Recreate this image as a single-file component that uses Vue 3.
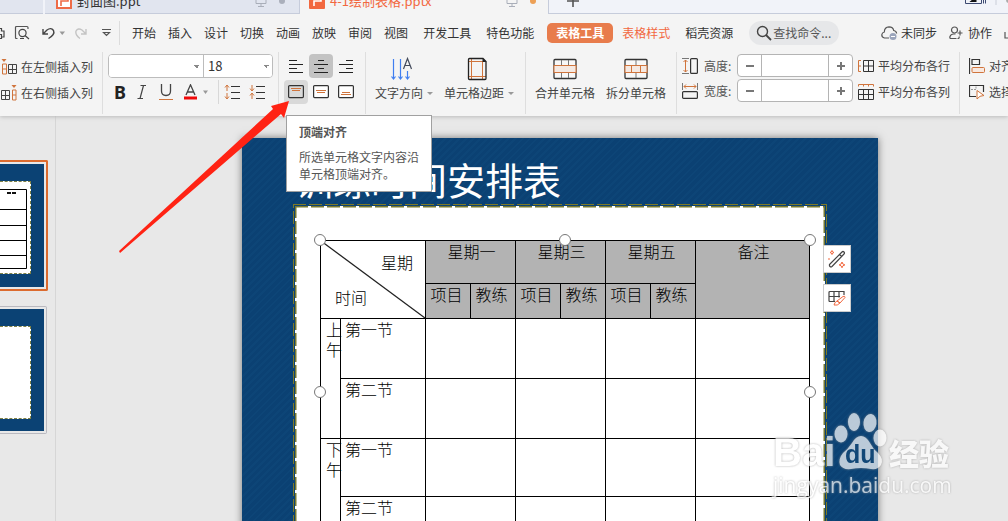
<script setup>
const tabs = ['开始', '插入', '设计', '切换', '动画', '放映', '审阅', '视图']
const days = ['星期一', '星期三', '星期五']
const rows = [
  { part: '上午', name: '第一节', h: 'r60' },
  { name: '第二节', h: 'r60' },
  { part: '下午', name: '第一节', h: 'r58' },
  { name: '第二节', h: 'r60' }
]
const sizes = [
  { id: 'row-height', label: '高度:' },
  { id: 'col-width', label: '宽度:' }
]
const thumbLines = [20, 36, 51, 66]
</script>

<template>
  <div class="app">
    <header class="tabs">
      <div class="tab tab-prev"></div>
      <div class="tab tab-idle">
        <svg class="doc" width="16" height="16" viewBox="0 0 16 16"><rect x="1" y="1" width="14" height="14" fill="#fff" stroke="#ee6b47" stroke-width="2" /><path d="M5 13V8h7V4H4" fill="none" stroke="#ee6b47" stroke-width="1.6" /></svg>
        <span class="tab-name">封面图.ppt</span>
        <svg class="screen" width="12" height="12" viewBox="0 0 12 12"><path d="M1 1h10v7.500H1zM6 8.500V11M3 11.500h6" fill="none" stroke="#a9aeb9" /></svg>
        <i class="dot grey"></i>
      </div>
      <div class="tab tab-active">
        <svg class="doc" width="16" height="16" viewBox="0 0 16 16"><rect width="16" height="16" rx="1" fill="#f2683f" /><path d="M5 13V8h7V4H4" fill="none" stroke="#fff" stroke-width="1.6" /></svg>
        <span class="tab-name">4-1绘制表格.pptx</span>
        <svg class="screen" width="12" height="12" viewBox="0 0 12 12"><path d="M1 1h10v7.500H1zM6 8.500V11M3 11.500h6" fill="none" stroke="#a9aeb9" /></svg>
        <i class="dot orange"></i>
      </div>
      <div class="tab tab-rest">
        <svg width="12" height="12" viewBox="0 0 12 12"><path d="M6 0v12M0 6h12" stroke="#555" stroke-width="1.600" /></svg>
        <svg class="win-icon" width="43" height="16" viewBox="0 0 43 16"><path d="M.5 0v10.500h16V0M18.500 0v10.500M20.500 0v10.500" fill="none" stroke="#3d4a72" /><path d="M7 2q2-2 3.500 0T7 8h4.500" fill="none" stroke="#111" stroke-width="1.800" /><path d="M31 0v12" stroke="#c9cdd8" /><circle cx="44" cy="7" r="3" fill="#aaa" /></svg>
      </div>
    </header>

    <nav class="menu">
      <div class="quick">
        <svg width="5" height="16" viewBox="0 0 5 16"><path d="M0 3.500h1.500V6H4v6H1.500M0 9.500h1.500v4H0" fill="none" stroke="#444" stroke-width="1.200" /></svg>
        <svg class="q-preview" width="16" height="16" viewBox="0 0 16 16"><path d="M3.500 13.500h-1q-1 0-1-1v-10q0-1 1-1h10.500q1 0 1 1V4" fill="none" stroke="#555" stroke-width="1.200" /><circle cx="8.500" cy="8" r="3.600" fill="none" stroke="#444" stroke-width="1.200" /><path d="M11 10.500l4 3.500M6 13.500h4" stroke="#444" stroke-width="1.200" /></svg>
        <svg class="q-undo" width="24" height="16" viewBox="0 0 24 16"><path d="M2 4v5h5M2 9l4-4q4-3 6.500.5 1.800 4-5 8" fill="none" stroke="#444" stroke-width="1.400" /><path d="M18.500 6.500h5.500L21.250 10z" fill="#999" /></svg>
        <svg class="q-redo" width="13" height="16" viewBox="0 0 13 16"><path d="M11 4v5H6M11 9L7 5Q3 2.500 1 6q-1 4 4 7.500" fill="none" stroke="#c4c4c4" stroke-width="1.400" /></svg>
        <svg class="q-more" width="9" height="10" viewBox="0 0 9 10"><path d="M0 1.500h9M1.500 4.500h6L4.500 7.500z" fill="none" stroke="#555" stroke-width="1.200" /></svg>
      </div>
      <div class="menu-items">
        <a v-for="t in tabs" :key="t" href="#">{{ t }}</a>
      </div>
      <a class="m-dev" href="#">开发工具</a>
      <a class="m-special" href="#">特色功能</a>
      <a class="m-table" href="#">表格工具</a>
      <a class="m-style" href="#">表格样式</a>
      <a class="m-docer" href="#">稻壳资源</a>
      <button class="search">
        <svg width="16" height="16" viewBox="0 0 16 16"><circle cx="6.500" cy="6.500" r="5" fill="none" stroke="#444" stroke-width="1.400" /><path d="M10 10l5 5" stroke="#444" stroke-width="1.800" /></svg>
        查找命令...
      </button>
      <div class="menu-end">
        <button class="plain sync">
          <svg width="17" height="14" viewBox="0 0 17 14"><path d="M8 12H3.500Q.7 11.500.8 8.800 1 6.500 3.300 6 3.500 1 8 .9 12 1 12.700 4.500 15.500 5 15.600 7.500" fill="none" stroke="#555" stroke-width="1.200" /><circle cx="12" cy="10.500" r="3.500" fill="#9aa4bb" /><path d="M10 10.500h4" stroke="#fff" /></svg>
          未同步
        </button>
        <button class="plain team">
          <svg width="14" height="14" viewBox="0 0 14 14"><circle cx="5.500" cy="4" r="3" fill="none" stroke="#555" stroke-width="1.200" /><path d="M7.500 12.500h-6q-1-.5-.5-2 1-2.500 3.500-2.500h2M8.500 12.500h1q1-.5.500-2M11 4.500v5M8.500 7h5" fill="none" stroke="#555" stroke-width="1.200" /></svg>
          协作
        </button>
        <svg class="share" width="4" height="14" viewBox="0 0 4 14"><path d="M1 6v6h3" fill="none" stroke="#555" stroke-width="1.200" /></svg>
      </div>
    </nav>

    <section class="ribbon">
      <div class="group g-insert">
        <button class="plain cmd">
          <svg width="16" height="16" viewBox="0 0 16 16"><path d="M.5 0h5L3 3z" fill="#d0743c" /><path d="M1.500 5h4v10h-4zM1.500 10h4" fill="none" stroke="#d0743c" /><path d="M7.500 5.500h8v9h-8zM11.500 5.500v9M7.500 10.500h8" fill="none" stroke="#444" /></svg>
          在左侧插入列
        </button>
        <button class="plain cmd">
          <svg width="16" height="16" viewBox="0 0 16 16"><path d="M10.500 0h5L13 3z" fill="#d0743c" /><path d="M11.500 5h3.500v10h-3.500zM11.500 10H15" fill="none" stroke="#d0743c" /><path d="M.5 5.500h8v9H.5zM4.500 5.500v9M.5 10.500h8" fill="none" stroke="#444" /></svg>
          在右侧插入列
        </button>
      </div>

      <div class="group g-font">
        <div class="combos">
          <select class="face" aria-label="字体"><option></option></select>
          <select class="size" aria-label="字号"><option>18</option></select>
        </div>
        <div class="styles">
          <button class="plain bold" aria-label="加粗">B</button>
          <button class="plain" aria-label="倾斜"><svg width="14" height="16" viewBox="0 0 14 16"><path d="M5.500 1.500H11M2.500 14.500H8M8.500 1.500L5 14.500" fill="none" stroke="#444" stroke-width="1.200" /></svg></button>
          <button class="plain" aria-label="下划线"><svg width="16" height="16" viewBox="0 0 16 16"><path d="M3.500 0v7q0 4.500 4.500 4.500T12.500 7V0" fill="none" stroke="#444" stroke-width="1.300" /><path d="M1 15.500h14" stroke="#d0743c" /></svg></button>
          <button class="plain" aria-label="字体颜色"><svg width="26" height="16" viewBox="0 0 26 16"><path d="M3 11L7.500.8 12 11M4.500 8h6" fill="none" stroke="#444" stroke-width="1.300" /><path d="M1 14h13" stroke="#f00808" stroke-width="3" /><path d="M20 6.500h5L22.500 10z" fill="#999" /></svg></button>
          <i class="bar"></i>
          <button class="plain" aria-label="增大行距"><svg width="16" height="16" viewBox="0 0 16 16"><path d="M3 7V1.500M1 3.500L3 1l2 2.500M3 9v5.500M1 12.500L3 15l2-2.500" fill="none" stroke="#d0743c" /><path d="M7 2.500h9M7 8.500h9M7 14.500h9" stroke="#333" stroke-width="1.200" /></svg></button>
          <button class="plain wide" aria-label="减小行距"><svg width="16" height="16" viewBox="0 0 16 16"><path d="M3 1v5.500M1 4.500L3 7l2-2.500M3 15V9.500M1 11.500L3 9l2 2.500" fill="none" stroke="#d0743c" /><path d="M7 2.500h9M7 8.500h9M7 14.500h9" stroke="#333" stroke-width="1.200" /></svg></button>
        </div>
      </div>

      <div class="group g-align">
        <button class="plain sq" aria-label="左对齐"><svg width="16" height="16" viewBox="0 0 16 16"><path d="M1 2.500h8M1 6.500h14M1 10.500h8M1 14.500h14" stroke="#222" /></svg></button>
        <button class="plain sq on" aria-label="居中"><svg width="16" height="16" viewBox="0 0 16 16"><path d="M5 2.500h6M1 6.500h14M5 10.500h6M1 14.500h14" stroke="#222" /></svg></button>
        <button class="plain sq" aria-label="右对齐"><svg width="16" height="16" viewBox="0 0 16 16"><path d="M8 2.500h7M1 6.500h14M8 10.500h7M1 14.500h14" stroke="#222" /></svg></button>
        <button class="plain sq hover" aria-label="顶端对齐"><svg width="16" height="14" viewBox="0 0 16 14"><rect x=".6" y=".6" width="14.800" height="12" rx="1" fill="none" stroke="#333" stroke-width="1.200" /><path d="M3 3.500h10M4 5.500h8" stroke="#d0743c" /></svg></button>
        <button class="plain sq" aria-label="垂直居中"><svg width="16" height="14" viewBox="0 0 16 14"><rect x=".6" y=".6" width="14.800" height="12" rx="1" fill="#fff" stroke="#333" stroke-width="1.200" /><path d="M3 5.500h10M4 7.500h8" stroke="#d0743c" /></svg></button>
        <button class="plain sq" aria-label="底端对齐"><svg width="16" height="14" viewBox="0 0 16 14"><rect x=".6" y=".6" width="14.800" height="12" rx="1" fill="#fff" stroke="#333" stroke-width="1.200" /><path d="M4 7.500h8M3 9.500h10" stroke="#d0743c" /></svg></button>
      </div>

      <div class="group g-big g-text">
        <button class="plain big">
          <svg width="24" height="24" viewBox="0 0 24 24"><path d="M3.500 2v20M1.500 19.500l2 2.500 2-2.500M10.500 2v20M8.500 19.500l2 2.500 2-2.500M17.500 14v8M15.500 19.500l2 2.500 2-2.500" fill="none" stroke="#3f7ef0" stroke-width="1.200" /><path d="M13.500 12l4-10.500 4 10.500M15 8.500h5" fill="none" stroke="#444b5c" stroke-width="1.200" /></svg>
          <span>文字方向<i class="caret"></i></span>
        </button>
        <button class="plain big">
          <svg width="24" height="24" viewBox="0 0 24 24"><path d="M6.500 1v22M17.500 5v18M3 4.500h15M3 19.500h18" stroke="#d0743c" /><path d="M4.500 1.500H18l3 3v17q0 1-1 1H4.500q-1 0-1-1v-19q0-1 1-1z" fill="none" stroke="#222" stroke-width="1.300" /><path d="M17.500 1v4H21.500z" fill="#222" /></svg>
          <span>单元格边距<i class="caret"></i></span>
        </button>
      </div>

      <div class="group g-big g-merge">
        <button class="plain big">
          <svg width="24" height="24" viewBox="0 0 24 24"><rect x="1" y="2.500" width="22" height="19" rx="1" fill="#f8f8f8" stroke="#333" stroke-width="1.300" /><path d="M8.500 3v6M15.500 3v6M8.500 15v6M15.500 15v6" stroke="#777" /><rect x="1" y="8.500" width="22" height="7" fill="#f5e9e2" stroke="#d0743c" /></svg>
          <span>合并单元格</span>
        </button>
        <button class="plain big">
          <svg width="24" height="24" viewBox="0 0 24 24"><rect x="1" y="2.500" width="22" height="19" rx="1" fill="#f8f8f8" stroke="#333" stroke-width="1.300" /><path d="M12 3v6M12 15v6" stroke="#777" /><rect x="1" y="8.500" width="22" height="7" fill="#f5e9e2" stroke="#d0743c" /><path d="M7.500 8.500v7M16.500 8.500v7" stroke="#d0743c" /></svg>
          <span>拆分单元格</span>
        </button>
      </div>

      <div class="group g-size">
        <div v-for="(s, i) in sizes" :key="s.id" class="size-row">
          <svg v-if="i === 0" width="16" height="16" viewBox="0 0 16 16"><path d="M0 .5h7M0 15.500h7" stroke="#777" /><path d="M3.500 2v12M1.500 4l2-2 2 2M1.500 12l2 2 2-2" fill="none" stroke="#d0743c" /><rect x="8.600" y=".6" width="6.800" height="14.800" rx="1" fill="none" stroke="#333" stroke-width="1.200" /></svg>
          <svg v-else width="16" height="16" viewBox="0 0 16 16"><path d="M.5 0v7M15.500 0v7" stroke="#777" /><path d="M2 3.500h12M4 1.500l-2 2 2 2M12 1.500l2 2-2 2" fill="none" stroke="#d0743c" /><rect x=".6" y="8.600" width="14.800" height="6.800" rx="1" fill="none" stroke="#333" stroke-width="1.200" /></svg>
          <label :for="s.id">{{ s.label }}</label>
          <div class="stepper">
            <button class="plain" aria-label="减少"><svg width="8" height="8" viewBox="0 0 8 8"><path d="M0 4h8" stroke="#777" stroke-width="2" /></svg></button>
            <input :id="s.id" type="text" />
            <button class="plain" aria-label="增加"><svg width="8" height="8" viewBox="0 0 8 8"><path d="M0 4h8M4 0v8" stroke="#777" stroke-width="2" /></svg></button>
          </div>
        </div>
      </div>

      <div class="group g-dist">
        <button class="plain cmd">
          <svg width="16" height="16" viewBox="0 0 16 16"><path d="M3 2.500H.5v11H3M.5 8H3" fill="none" stroke="#d0743c" /><path d="M5.500 2.500h10v11h-10zM10.500 2.500v11M5.500 8h10" fill="none" stroke="#333" /></svg>
          平均分布各行
        </button>
        <button class="plain cmd">
          <svg width="16" height="16" viewBox="0 0 16 16"><path d="M.5 2.500V.5h15v2M5.500.5v2M10.500.5v2" fill="none" stroke="#d0743c" /><path d="M.5 5.500h15v10H.5zM5.500 5.500v10M10.500 5.500v10M.5 10.500h15" fill="none" stroke="#333" /></svg>
          平均分布各列
        </button>
      </div>

      <div class="group g-last">
        <button class="plain cmd">
          <svg width="16" height="16" viewBox="0 0 16 16"><path d="M.5 0v16M3 1.500h7.500v5H3z" fill="none" stroke="#333" stroke-width="1.200" /><rect x="3" y="9.500" width="12.500" height="5" rx="1" fill="#f8e8df" stroke="#d0743c" /></svg>
          对齐
        </button>
        <button class="plain cmd">
          <svg width="16" height="16" viewBox="0 0 16 16"><path d="M7 12.500H.5v-11h14V8" fill="none" stroke="#333" stroke-width="1.200" /><path d="M2 5.500h5v-3" stroke="#999" stroke-dasharray="2 1" fill="none" /><path d="M8 6.500l7 5-4 .8L8 15z" fill="#fff" stroke="#d0743c" /></svg>
          选择
        </button>
      </div>
    </section>

    <main class="work">
      <aside class="side">
        <div class="thumb current">
          <div class="mini"><div class="paper">
            <svg width="30" height="92" viewBox="0 0 30 92"><path d="M0 7.500h26.500v79H0" fill="none" stroke="#000" /><path v-for="y in thumbLines" :key="y" :d="`M0 ${y + 7.5}h26.500`" stroke="#000" /><path d="M7 11h4M12 11h4" stroke="#111" stroke-width="2" /></svg>
          </div></div>
        </div>
        <div class="thumb">
          <div class="mini"><div class="paper"></div></div>
        </div>
      </aside>

      <div class="canvas">
        <div class="slide">
          <h1>训练时间安排表</h1>
          <div class="sheet">
            <svg class="edge edge-out"><rect width="100%" height="700" /></svg>
            <svg class="edge edge-in"><rect width="100%" height="700" /></svg>
            <div class="grid-wrap">
              <table>
                <colgroup>
                  <col class="c-part" /><col class="c-name" />
                  <col v-for="n in 6" :key="n" class="c-day" />
                  <col />
                </colgroup>
                <tbody>
                  <tr class="r43">
                    <td colspan="2" rowspan="2" class="corner">
                      <svg class="slash" width="100%" height="100%" viewBox="0 0 105 78" preserveAspectRatio="none"><path d="M0 0L105 78" stroke="#222" stroke-width="1.300" /></svg>
                      <div class="c-week">星期</div>
                      <div class="c-time">时间</div>
                    </td>
                    <th v-for="d in days" :key="d" colspan="2">{{ d }}</th>
                    <th rowspan="2">备注</th>
                  </tr>
                  <tr class="r35">
                    <template v-for="d in days" :key="d"><th class="sub">项目</th><th class="sub">教练</th></template>
                  </tr>
                  <tr v-for="(r, i) in rows" :key="i" :class="r.h">
                    <td v-if="r.part" rowspan="2" class="part">{{ r.part }}</td>
                    <td class="name">{{ r.name }}</td>
                    <td colspan="2"></td><td colspan="2"></td><td colspan="2"></td><td></td>
                  </tr>
                </tbody>
              </table>
              <i class="knob tl"></i><i class="knob tm"></i><i class="knob tr"></i>
              <i class="knob ml"></i><i class="knob mr"></i>
            </div>
          </div>
          <div class="float">
            <button aria-label="美化"><svg width="18" height="18" viewBox="0 0 18 18"><path d="M1.500 14.500L14 2q1-1 2 0t0 2L4 16.500q-1.200.8-2 0t-.5-2zM11.500 4.500l2 2" fill="none" stroke="#444" stroke-width="1.200" /><path d="M4 .5l.6 1.400L6 2.500l-1.400.6L4 4.500l-.6-1.400L2 2.500l1.400-.6zM14 12l.9 2 2 .9-2 .9-.9 2-.9-2-2-.9 2-.9z" fill="none" stroke="#f2683f" /><path d="M0 9h2" stroke="#f2683f" /></svg></button>
            <button aria-label="表格样式"><svg width="18" height="18" viewBox="0 0 18 18"><path d="M7 12.500H2q-1 0-1-1V3.500q0-1 1-1h14V6M1 7.500h11M6 2.500v10M11 2.500v6" fill="none" stroke="#444" stroke-width="1.200" /><path d="M9 12l6-4.500q2-1 2 1L12 14zM9 12q-2 .5-3 4 3.500 1 6-2z" fill="#fff" stroke="#f2683f" /></svg></button>
          </div>
        </div>
      </div>

      <div class="mark">
        <div class="mark-top">
          <span class="bai">Bai</span>
          <svg class="paw" width="54" height="58" viewBox="0 0 54 58"><g fill="#fff"><ellipse cx="7" cy="22" rx="6.500" ry="8.500" /><ellipse cx="20" cy="10" rx="6" ry="9" /><ellipse cx="36" cy="11" rx="6.500" ry="9" transform="rotate(8 36 11)" /><ellipse cx="46" cy="26" rx="6.500" ry="8.500" /><path d="M27 24q5 0 9 7 3 6 8 10 6 6 3 12-3 5-10 4-5-1-10-1t-10 1q-8 1-11-4-2-6 3-12 5-4 9-10 4-7 9-7z" /></g></svg>
          <b class="du">du</b>
          <span class="jy">经验</span>
        </div>
        <div class="mark-url">jingyan.baidu.com</div>
      </div>
    </main>

    <div class="tip" role="tooltip">
      <b>顶端对齐</b>
      <p>所选单元格文字内容沿单元格顶端对齐。</p>
    </div>
    <svg class="arrow" width="180" height="160" viewBox="115 98 180 160"><path d="M289 101L271 106 273 109 119 251 120 253 281 114 284 118z" fill="#ff2314" /></svg>
  </div>
</template>

<style>
body { margin: 0; background: #e8e8e8; }
</style>

<style scoped>
.app {
  position: relative;
  display: flex;
  flex-direction: column;
  height: 100vh;
  overflow: hidden;
  font: 12px/18px "Noto Sans CJK SC", "Noto Sans", sans-serif;
  color: #333;
}
.app *, .app { box-sizing: border-box; }
svg { display: block; flex: none; }
a { color: inherit; text-decoration: none; }
button, input, select { font: inherit; color: inherit; margin: 0; }
.plain { display: flex; align-items: center; justify-content: center; padding: 0; border: 0; background: none; white-space: nowrap; }

.tabs { display: flex; align-items: flex-end; height: 14px; flex: none; overflow: hidden; background: #f1f3f9; }
.tab { display: flex; align-items: center; flex: none; height: 26px; border-bottom: 1px solid #c6ccdb; }
.tab-prev { width: 43px; margin-right: 2px; background: #e1e5ef; }
.tab-idle { width: 255px; padding: 0 14px 0 11px; background: #e1e5ef; border-right: 1px solid #c6ccdb; }
.tab-active { width: 248px; padding: 0 12px 0 9px; background: #f4f4f4; border-bottom-color: #f4f4f4; color: #f2683f; }
.tab-rest { flex: 1; justify-content: space-between; padding-left: 18px; border-left: 1px solid #c6ccdb; }
.tab-name { flex: 1; margin-left: 5px; font-size: 13px; }
.dot { width: 6px; height: 6px; margin-left: 12px; border-radius: 3px; }
.grey { background: #aaafbb; }
.orange { background: #eda055; }

.menu { position: relative; z-index: 2; display: flex; align-items: center; flex: none; height: 38px; background: #f4f4f4; white-space: nowrap; }
.quick { display: flex; align-items: center; flex: none; width: 120px; height: 24px; margin-right: 12px; border-right: 1px solid #dcdcdc; }
.q-preview { margin-left: 9px; }
.q-undo { margin-left: 11px; }
.q-redo { margin-left: 10px; }
.q-more { margin-left: 14px; }
.menu-items { display: flex; gap: 12px; }
.m-dev { margin-left: 15px; }
.m-special { margin: 0 9px 0 15px; }
.m-table { height: 20px; padding: 0 9px; border-radius: 5px; background: #e87c4c; color: #fff; font-weight: bold; line-height: 20px; margin-left: 4px; }
.m-style { margin: 0 15px 0 9px; color: #f2683f; }
.search { display: flex; align-items: center; gap: 1px; height: 24px; margin-left: 16px; padding: 0 8px 0 7px; border: 0; border-radius: 12px; background: #e6e7e9; color: #555; }
.menu-end { display: flex; align-items: center; margin-left: auto; }
.sync { gap: 3px; margin-right: 12px; }
.team { gap: 5px; margin-right: 12px; }

.ribbon { position: relative; z-index: 1; display: flex; flex: none; height: 64px; background: #f4f4f4; box-shadow: 0 1px 4px #bbb; }
.group { flex: none; height: 62px; border-right: 1px solid #dedede; }
.cmd { gap: 4px; height: 26px; color: #444; }
.g-insert { width: 103px; padding: 2px 0 0 1px; }
.g-font { width: 176px; padding: 2px 0 0 5px; }
.combos { display: flex; width: 165px; height: 24px; border: 1px solid #bcbcbc; border-radius: 4px; background: #fff; overflow: hidden; }
.combos select {
  appearance: none;
  height: 22px;
  padding: 0 4px;
  border: 0;
  border-radius: 0;
  font-size: 13px;
  background: linear-gradient(45deg, transparent 50%, #888 50%) right 6px top 10px / 3px 3px no-repeat, linear-gradient(135deg, #888 50%, transparent 50%) right 3px top 10px / 3px 3px no-repeat #fff;
}
.combos .face { flex: 1; border-right: 1px solid #bcbcbc; }
.combos .size { width: 68px; }
.styles { display: flex; align-items: center; height: 24px; margin: 2px 0 0 6px; gap: 9px; }
.bold { width: 12px; font: bold 18px/24px "Noto Sans", sans-serif; color: #222; }
.bar { width: 1px; height: 24px; margin-right: -4px; background: #d8d8d8; }
.g-align { display: grid; grid-template-columns: repeat(3, 24px); grid-auto-rows: 24px; gap: 2px 1px; align-content: start; width: 87px; padding: 2px 0 0 5px; }
.sq { border-radius: 4px; }
.on { background: #c3c3c3; }
.hover { background: #d9d9d9; }
.g-big { display: flex; padding-top: 5px; gap: 11px; }
.big { flex-direction: column; align-items: center; justify-content: flex-start; gap: 3px; height: 50px; color: #444; }
.g-text { width: 160px; padding-left: 9px; }
.g-text .big svg { margin-right: 4px; }
.g-merge { width: 151px; padding-left: 9px; }
.caret { display: inline-block; margin-left: 4px; vertical-align: 3px; border: 3px solid transparent; border-top-color: #999; border-bottom: 0; }
.g-size { display: flex; flex-direction: column; gap: 2px; width: 177px; padding: 2px 0 0 5px; border: 0; }
.size-row { display: flex; align-items: center; height: 23px; color: #555; }
.size-row label { width: 33px; margin-left: 6px; }
.stepper { display: flex; width: 116px; height: 23px; border: 1px solid #b4b4b4; border-radius: 4px; background: #fff; overflow: hidden; }
.stepper .plain { width: 23px; }
.stepper input { flex: 1; min-width: 0; padding: 0 4px; border: 1px solid #b4b4b4; border-width: 0 1px; background: #fff; }
.g-dist { width: 106px; padding: 1px 0 0 4px; }
.g-last { flex: 1; padding: 1px 0 0 9px; border: 0; overflow: hidden; }

.work { position: relative; display: flex; flex: 1; min-height: 0; background: #e8e8e8; overflow: hidden; }
.side { flex: none; width: 56px; padding-top: 44px; border-right: 1px solid #d6d6d6; }
.thumb { width: 47px; height: 128px; margin-bottom: 15px; padding: 2px 2px 2px 0; border: 1px solid #b9b9c0; border-left: 0; border-radius: 0 2px 2px 0; }
.thumb.current { width: 48px; height: 131px; border: 2px solid #dc6b2f; border-left: 0; }
.mini { height: 100%; padding: 17px 13px 0 0; background: #0b4274; }
.paper { height: 93px; border: 1px dashed #7f8145; border-left: 0; background: #fff; overflow: hidden; }

.canvas { flex: 1; padding: 22px 130px 0 186px; min-width: 0; }
.slide {
  position: relative;
  height: 600px;
  padding: 21px 51px 0;
  background: repeating-linear-gradient(135deg, #0b4173 0 3px, #0d4577 3px 5px);
  box-shadow: 0 0 8px #777;
}
h1 { height: 45px; margin: 0 0 0 2px; font-size: 38px; font-weight: 400; line-height: 40px; color: #fff; white-space: nowrap; }
.sheet { position: relative; height: 600px; padding: 36px 17px 0 27px; }
.edge { position: absolute; }
.edge rect { fill: none; }
.edge-out { inset: 0; width: 100%; height: 100%; }
.edge-out rect { stroke: #7d7a27; stroke-width: 2px; stroke-dasharray: 13px 3px; }
.edge-in { left: 2px; top: 2px; width: calc(100% - 4px); height: 100%; background: #fff; }
.edge-in rect { stroke: #77782f; stroke-width: 3px; stroke-dasharray: 13px 3px; }
.grid-wrap { position: relative; }
table { width: 100%; table-layout: fixed; border-collapse: collapse; font-size: 16px; line-height: 20px; color: #000; }
.c-part { width: 20px; }
.c-name { width: 85px; }
.c-day { width: 45px; }
td, th { padding: 0 0 0 4px; border: 1px solid #000; vertical-align: top; text-align: left; font-weight: 300; }
th { padding-left: 2px; background: #b3b3b3; text-align: center; }
.sub { padding: 0 3px 0 0; }
.r43 { height: 43px; }
.r35 { height: 35px; }
.r60 { height: 60px; }
.r58 { height: 58px; }
.corner { position: relative; padding: 11px 12px 0 14px; }
.c-week { text-align: right; }
.c-time { margin-top: 15px; }
.slash { position: absolute; inset: 0; }
.part { padding: 0 0 0 5px; word-break: break-all; }
.knob { position: absolute; width: 12px; height: 12px; border: 1px solid #777; border-radius: 6px; background: #fff; }
.tl { left: -6px; top: -6px; }
.tm { left: calc(50% - 6px); top: -6px; }
.tr { right: -6px; top: -6px; }
.ml { left: -6px; top: 146px; }
.mr { right: -6px; top: 146px; }
.float { position: absolute; top: 107px; right: 27px; display: flex; flex-direction: column; gap: 11px; }
.float button { display: flex; align-items: center; justify-content: center; width: 28px; height: 28px; padding: 0; border: 1px solid #ccc; background: #fff; }

.mark { position: absolute; left: 773px; top: 294px; opacity: .72; color: #fff; filter: drop-shadow(0 0 1px #999); }
.mark-top { position: relative; display: flex; align-items: flex-end; height: 60px; }
.bai { width: 61px; font: bold 40px/36px "Liberation Sans", sans-serif; }
.du { position: absolute; left: 72px; bottom: 1px; font: bold 25px/30px "Liberation Sans", sans-serif; color: #164a78; }
.jy { margin-left: 1px; font-size: 30px; font-weight: 900; line-height: 36px; }
.mark-url { margin-top: 2px; font: 21px/26px "Open Sans", sans-serif; }

.tip { position: absolute; z-index: 2; left: 286px; top: 115px; width: 146px; height: 77px; padding: 7px 12px; border: 1px solid #a0a0a0; background: #fff; color: #555; }
.tip b { display: block; }
.tip p { margin: 7px 0 0; line-height: 17px; }
.arrow { position: absolute; z-index: 3; left: 115px; top: 98px; }
</style>
